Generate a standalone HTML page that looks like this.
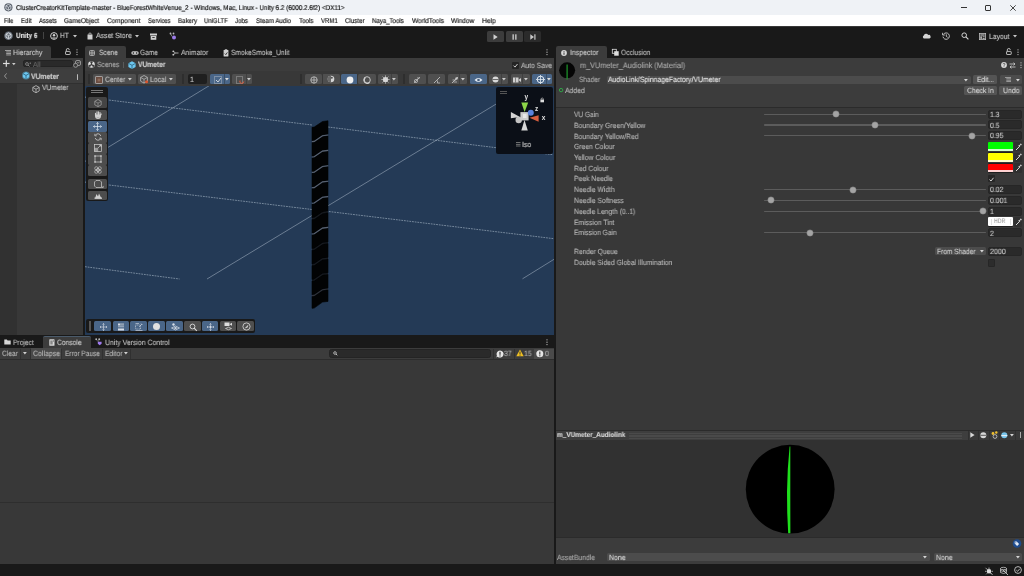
<!DOCTYPE html>
<html><head><meta charset="utf-8"><title>Unity</title><style>
*{margin:0;padding:0;box-sizing:border-box}
html,body{width:1024px;height:576px;overflow:hidden;background:#383838;font-family:"Liberation Sans",sans-serif}
.a{position:absolute}
.t{white-space:nowrap;line-height:12px;height:12px;transform-origin:0 50%;will-change:transform;text-rendering:geometricPrecision;-webkit-text-stroke:0.12px currentColor}
svg{overflow:visible}
</style></head><body>
<div class="a" style="left:0px;top:0px;width:1024px;height:15.3px;background:#eff2f6;"></div>
<svg class="a" style="left:4px;top:3px;" width="9" height="9" viewBox="0 0 9 9"><circle cx="4.4" cy="4.3" r="4.1" fill="#59616c"/><path d="M4.4 1.4L6.9 2.8V5.8L4.4 7.2L1.9 5.8V2.8Z" fill="none" stroke="#dfe4ea" stroke-width="0.8"/><path d="M1.9 2.8L4.4 4.3L6.9 2.8M4.4 4.3V7.2" fill="none" stroke="#dfe4ea" stroke-width="0.7"/></svg>
<div class="a t " style="left:16px;top:2.50px;font-size:6.95px;transform:scaleX(0.9099);color:#111;font-weight:400;-webkit-text-stroke:0.18px #111">ClusterCreatorKitTemplate-master - BlueForestWhiteVenue_2 - Windows, Mac, Linux - Unity 6.2 (6000.2.6f2) &lt;DX11&gt;</div>
<div class="a" style="left:961px;top:7px;width:6px;height:1px;background:#333;"></div>
<div class="a" style="left:985px;top:4.5px;width:6px;height:6px;background:transparent;border:1px solid #333;box-sizing:border-box;border-radius:1px"></div>
<svg class="a" style="left:1010px;top:4.5px;" width="6" height="6" viewBox="0 0 6 6"><path d="M0.3 0.3L5.7 5.7M5.7 0.3L0.3 5.7" stroke="#333" stroke-width="0.9"/></svg>
<div class="a" style="left:0px;top:15.3px;width:1024px;height:11.2px;background:#ffffff;"></div>
<div class="a t " style="left:3.8px;top:15.80px;font-size:6.88px;transform:scaleX(0.8350);color:#111;font-weight:400;-webkit-text-stroke:0.15px #111">File</div>
<div class="a t " style="left:20.5px;top:15.80px;font-size:6.88px;transform:scaleX(0.8863);color:#111;font-weight:400;-webkit-text-stroke:0.15px #111">Edit</div>
<div class="a t " style="left:38.8px;top:15.80px;font-size:6.88px;transform:scaleX(0.8603);color:#111;font-weight:400;-webkit-text-stroke:0.15px #111">Assets</div>
<div class="a t " style="left:64px;top:15.80px;font-size:6.88px;transform:scaleX(0.9069);color:#111;font-weight:400;-webkit-text-stroke:0.15px #111">GameObject</div>
<div class="a t " style="left:106.8px;top:15.80px;font-size:6.88px;transform:scaleX(0.9355);color:#111;font-weight:400;-webkit-text-stroke:0.15px #111">Component</div>
<div class="a t " style="left:147.5px;top:15.80px;font-size:6.88px;transform:scaleX(0.8535);color:#111;font-weight:400;-webkit-text-stroke:0.15px #111">Services</div>
<div class="a t " style="left:177.8px;top:15.80px;font-size:6.88px;transform:scaleX(0.8880);color:#111;font-weight:400;-webkit-text-stroke:0.15px #111">Bakery</div>
<div class="a t " style="left:204px;top:15.80px;font-size:6.88px;transform:scaleX(0.8676);color:#111;font-weight:400;-webkit-text-stroke:0.15px #111">UniGLTF</div>
<div class="a t " style="left:235px;top:15.80px;font-size:6.88px;transform:scaleX(0.8952);color:#111;font-weight:400;-webkit-text-stroke:0.15px #111">Jobs</div>
<div class="a t " style="left:256px;top:15.80px;font-size:6.88px;transform:scaleX(0.8978);color:#111;font-weight:400;-webkit-text-stroke:0.15px #111">Steam Audio</div>
<div class="a t " style="left:299px;top:15.80px;font-size:6.88px;transform:scaleX(0.9035);color:#111;font-weight:400;-webkit-text-stroke:0.15px #111">Tools</div>
<div class="a t " style="left:321px;top:15.80px;font-size:6.88px;transform:scaleX(0.8769);color:#111;font-weight:400;-webkit-text-stroke:0.15px #111">VRM1</div>
<div class="a t " style="left:345.3px;top:15.80px;font-size:6.88px;transform:scaleX(0.8955);color:#111;font-weight:400;-webkit-text-stroke:0.15px #111">Cluster</div>
<div class="a t " style="left:372.3px;top:15.80px;font-size:6.88px;transform:scaleX(0.8838);color:#111;font-weight:400;-webkit-text-stroke:0.15px #111">Naya_Tools</div>
<div class="a t " style="left:411.5px;top:15.80px;font-size:6.88px;transform:scaleX(0.9446);color:#111;font-weight:400;-webkit-text-stroke:0.15px #111">WorldTools</div>
<div class="a t " style="left:451px;top:15.80px;font-size:6.88px;transform:scaleX(0.9508);color:#111;font-weight:400;-webkit-text-stroke:0.15px #111">Window</div>
<div class="a t " style="left:482.3px;top:15.80px;font-size:6.88px;transform:scaleX(0.9725);color:#111;font-weight:400;-webkit-text-stroke:0.15px #111">Help</div>
<div class="a" style="left:0px;top:26.5px;width:1024px;height:19px;background:#191919;"></div>
<svg class="a" style="left:4px;top:31px;" width="9" height="10" viewBox="0 0 9 10"><circle cx="4.5" cy="4.8" r="4.3" fill="#6a727c"/><path d="M4.5 1.8L7 3.2V6.3L4.5 7.7L2 6.3V3.2Z" fill="none" stroke="#e2e6ea" stroke-width="0.8"/><path d="M2 3.2L4.5 4.7L7 3.2M4.5 4.7V7.7" fill="none" stroke="#e2e6ea" stroke-width="0.7"/></svg>
<div class="a t " style="left:15.6px;top:30.40px;font-size:7.59px;transform:scaleX(0.8496);color:#e6e6e6;font-weight:700;">Unity 6</div>
<div class="a" style="left:42.5px;top:32px;width:0.8px;height:7px;background:#444;"></div>
<svg class="a" style="left:49.5px;top:32px;" width="8" height="8" viewBox="0 0 8 8"><circle cx="4" cy="4" r="3.4" fill="none" stroke="#cfcfcf" stroke-width="1"/><circle cx="4" cy="3.2" r="1.2" fill="#cfcfcf"/><path d="M1.8 5.6 Q4 7.8 6.2 5.6" fill="#cfcfcf"/></svg>
<div class="a t " style="left:59.6px;top:30.40px;font-size:7.59px;transform:scaleX(0.8698);color:#c8c8c8;font-weight:400;">HT</div>
<svg class="a" style="left:72.5px;top:34.5px;" width="4" height="3" viewBox="0 0 4 3"><path d="M0 0H4L2 2.5Z" fill="#c8c8c8"/></svg>
<svg class="a" style="left:86.5px;top:31.5px;" width="6" height="8" viewBox="0 0 6 8"><path d="M0.5 2.5H5.5V7.5H0.5Z" fill="#cfcfcf"/><path d="M1.8 2.5V1.6Q3 0.2 4.2 1.6V2.5" fill="none" stroke="#cfcfcf" stroke-width="0.8"/></svg>
<div class="a t " style="left:96px;top:30.40px;font-size:7.59px;transform:scaleX(0.9125);color:#c8c8c8;font-weight:400;">Asset Store</div>
<svg class="a" style="left:135px;top:34.5px;" width="4" height="3" viewBox="0 0 4 3"><path d="M0 0H4L2 2.5Z" fill="#c8c8c8"/></svg>
<svg class="a" style="left:150px;top:32.5px;" width="7" height="7" viewBox="0 0 7 7"><rect x="0" y="0.5" width="7" height="2" fill="#d0d0d0"/><rect x="0.7" y="3" width="5.6" height="3.8" fill="#d0d0d0"/><rect x="2.3" y="4" width="2.4" height="0.8" fill="#191919"/></svg>
<svg class="a" style="left:169px;top:32px;" width="8" height="8" viewBox="0 0 8 8"><circle cx="1.5" cy="1.5" r="0.9" fill="#bbb"/><circle cx="4.5" cy="1.5" r="0.9" fill="#bbb"/><path d="M1.5 1.5 L3 4.5" stroke="#bbb" stroke-width="0.6"/><circle cx="5" cy="5.5" r="2" fill="#9b7be8"/></svg>
<div class="a" style="left:487px;top:31px;width:17px;height:10.5px;background:#3c3c3c;border-radius:1.5px"></div>
<div class="a" style="left:505.5px;top:31px;width:17px;height:10.5px;background:#3c3c3c;border-radius:1.5px"></div>
<div class="a" style="left:524px;top:31px;width:17px;height:10.5px;background:#2b2b2b;border-radius:1.5px"></div>
<svg class="a" style="left:493px;top:33.5px;" width="5" height="6" viewBox="0 0 5 6"><path d="M0.5 0.3L4.7 3L0.5 5.7Z" fill="#d0d0d0"/></svg>
<svg class="a" style="left:511.5px;top:33.5px;" width="5" height="6" viewBox="0 0 5 6"><rect x="0.5" y="0.3" width="1.3" height="5.4" fill="#d0d0d0"/><rect x="3.2" y="0.3" width="1.3" height="5.4" fill="#d0d0d0"/></svg>
<svg class="a" style="left:529.5px;top:33.5px;" width="6" height="6" viewBox="0 0 6 6"><path d="M0.3 0.3L4 3L0.3 5.7Z" fill="#c8c8c8"/><rect x="4.3" y="0.3" width="1.2" height="5.4" fill="#c8c8c8"/></svg>
<svg class="a" style="left:922px;top:32.5px;" width="9" height="6" viewBox="0 0 9 6"><path d="M1.8 5.5 A1.6 1.6 0 0 1 1.8 2.6 A2.4 2.4 0 0 1 6.2 2 A1.8 1.8 0 0 1 7.4 5.5Z" fill="#d4d4d4"/></svg>
<svg class="a" style="left:941.5px;top:32px;" width="8" height="8" viewBox="0 0 8 8"><path d="M1.6 2.2 A3.2 3.2 0 1 1 1 4.6" fill="none" stroke="#cfcfcf" stroke-width="0.9"/><path d="M0.6 0.8V3H2.8" fill="none" stroke="#cfcfcf" stroke-width="0.9"/><path d="M4.3 2.3V4.3L5.6 5.3" fill="none" stroke="#cfcfcf" stroke-width="0.9"/></svg>
<svg class="a" style="left:961px;top:32px;" width="8" height="8" viewBox="0 0 8 8"><circle cx="3.2" cy="3.2" r="2.3" fill="none" stroke="#d4d4d4" stroke-width="1"/><path d="M4.9 4.9L7.4 7.4" stroke="#d4d4d4" stroke-width="1.2"/></svg>
<svg class="a" style="left:978.5px;top:32.5px;" width="7" height="7" viewBox="0 0 7 7"><rect x="0.4" y="0.4" width="6.2" height="6.2" fill="none" stroke="#c0c0c0" stroke-width="0.8"/><rect x="1.3" y="1.4" width="4.4" height="1.2" fill="#c0c0c0"/><rect x="1.3" y="3.3" width="1.6" height="2.6" fill="#c0c0c0"/><rect x="3.6" y="3.3" width="2.1" height="1" fill="#c0c0c0"/><rect x="3.6" y="5" width="2.1" height="0.9" fill="#c0c0c0"/></svg>
<div class="a t " style="left:988.6px;top:30.80px;font-size:7.59px;transform:scaleX(0.8952);color:#c8c8c8;font-weight:400;">Layout</div>
<svg class="a" style="left:1013px;top:35px;" width="4" height="3" viewBox="0 0 4 3"><path d="M0 0H4L2 2.5Z" fill="#c8c8c8"/></svg>
<div class="a" style="left:0px;top:45.5px;width:1024px;height:12.5px;background:#191919;"></div>
<div class="a" style="left:0px;top:58px;width:83px;height:277px;background:#383838;"></div>
<div class="a" style="left:0px;top:83px;width:17px;height:252px;background:#313131;"></div>
<div class="a" style="left:0px;top:46px;width:50.5px;height:12.5px;background:#3c3c3c;border-radius:0 2px 0 0"></div>
<svg class="a" style="left:4.5px;top:50px;" width="6" height="5.5" viewBox="0 0 6 5.5"><rect x="0" y="0" width="6" height="0.9" fill="#aaa"/><rect x="1.2" y="1.5" width="4.8" height="0.9" fill="#aaa"/><rect x="1.2" y="3" width="4.8" height="0.9" fill="#aaa"/><rect x="1.2" y="4.5" width="4.8" height="0.9" fill="#aaa"/></svg>
<div class="a t " style="left:12.7px;top:47.20px;font-size:7.65px;transform:scaleX(0.9018);color:#c8c8c8;font-weight:400;">Hierarchy</div>
<svg class="a" style="left:64.8px;top:48.3px;" width="6" height="7" viewBox="0 0 6 7"><path d="M1.3 3.3V1.9Q1.3 0.5 2.8 0.5Q4.3 0.5 4.3 1.9" fill="none" stroke="#d6d6d6" stroke-width="0.85"/><rect x="0.6" y="3.4" width="4.6" height="3.1" rx="0.5" fill="none" stroke="#d6d6d6" stroke-width="0.85"/></svg>
<svg class="a" style="left:75.8px;top:49px;" width="2" height="7" viewBox="0 0 2 7"><circle cx="1" cy="0.8" r="0.6" fill="#cfcfcf"/><circle cx="1" cy="3.2" r="0.6" fill="#cfcfcf"/><circle cx="1" cy="5.6" r="0.6" fill="#cfcfcf"/></svg>
<div class="a" style="left:0px;top:58px;width:83px;height:11px;background:#3c3c3c;"></div>
<svg class="a" style="left:3px;top:60px;" width="7" height="7" viewBox="0 0 7 7"><rect x="0" y="2.9" width="6.6" height="1.2" fill="#ddd"/><rect x="2.7" y="0.2" width="1.2" height="6.6" fill="#ddd"/></svg>
<svg class="a" style="left:12.3px;top:62.5px;" width="4" height="3" viewBox="0 0 4 3"><path d="M0 0H3.6L1.8 2.3Z" fill="#ccc"/></svg>
<div class="a" style="left:23px;top:60.3px;width:50px;height:7px;background:#2a2a2a;border-radius:2px;border:0.5px solid #232323"></div>
<svg class="a" style="left:25px;top:61.5px;" width="6" height="5" viewBox="0 0 6 5"><circle cx="2" cy="2" r="1.4" fill="none" stroke="#999" stroke-width="0.7"/><path d="M3 3L4.5 4.5" stroke="#999" stroke-width="0.8"/><path d="M4.6 1.2H6M5.3 .5V2" stroke="#999" stroke-width="0.5"/></svg>
<div class="a t " style="left:33px;top:58.50px;font-size:7.37px;transform:scaleX(0.9091);color:#6a6a6a;font-weight:400;">All</div>
<svg class="a" style="left:73px;top:60px;" width="8" height="8" viewBox="0 0 8 8"><rect x="2.5" y="0.5" width="5" height="5" rx="1.5" fill="none" stroke="#aaa" stroke-width="0.8"/><circle cx="2.6" cy="5.3" r="2" fill="#383838" stroke="#aaa" stroke-width="0.8"/><path d="M4.3 2.2L5.3 3.2L6.6 1.7" fill="none" stroke="#aaa" stroke-width="0.7"/></svg>
<div class="a" style="left:0px;top:69px;width:83px;height:14px;background:#3e3e3e;"></div>
<div class="a" style="left:0px;top:82.6px;width:83px;height:0.6px;background:#303030;"></div>
<svg class="a" style="left:3.5px;top:73px;" width="3" height="6" viewBox="0 0 3 6"><path d="M2.6 0.4L0.5 3L2.6 5.6" fill="none" stroke="#aaa" stroke-width="0.8"/></svg>
<svg class="a" style="left:22px;top:71px;" width="8" height="9" viewBox="0 0 8 9"><circle cx="4" cy="4.5" r="4" fill="#5fbde8" opacity="0.5"/><path d="M4 1L7 2.7V6.2L4 7.9L1 6.2V2.7Z" fill="#6cc7f0"/><path d="M1 2.7L4 4.4L7 2.7M4 4.4V7.9" fill="none" stroke="#1f4e66" stroke-width="0.7"/></svg>
<div class="a t " style="left:31px;top:70.90px;font-size:7.81px;transform:scaleX(0.8717);color:#d0d0d0;font-weight:700;">VUmeter</div>
<div class="a" style="left:76.5px;top:74px;width:1.4px;height:5.5px;background:#bbb;border-radius:0.5px"></div>
<svg class="a" style="left:32px;top:84.5px;" width="8" height="8" viewBox="0 0 8 8"><path d="M4 0.6L7.2 2.4V6L4 7.7L0.8 6V2.4Z" fill="none" stroke="#c0c0c0" stroke-width="0.8"/><path d="M0.8 2.4L4 4.2L7.2 2.4M4 4.2V7.7" fill="none" stroke="#c0c0c0" stroke-width="0.8"/></svg>
<div class="a t " style="left:41.5px;top:82.40px;font-size:7.65px;transform:scaleX(0.8786);color:#c4c4c4;font-weight:400;">VUmeter</div>
<div class="a" style="left:83px;top:58px;width:2px;height:277px;background:#191919;"></div>
<div class="a" style="left:85px;top:58px;width:469px;height:277px;background:#383838;"></div>
<div class="a" style="left:85px;top:46px;width:41px;height:12.5px;background:#3c3c3c;border-radius:2px 2px 0 0"></div>
<svg class="a" style="left:89px;top:49.5px;" width="6" height="6" viewBox="0 0 6 6"><rect x="0.5" y="0.5" width="5" height="5" rx="1" fill="none" stroke="#bbb" stroke-width="0.8"/><path d="M0.5 2.3H5.5M0.5 3.8H5.5M2.3 0.5V5.5M3.8 0.5V5.5" stroke="#bbb" stroke-width="0.6"/></svg>
<div class="a t " style="left:98.5px;top:47.10px;font-size:7.65px;transform:scaleX(0.8650);color:#c8c8c8;font-weight:400;">Scene</div>
<svg class="a" style="left:131px;top:50.5px;" width="8" height="4" viewBox="0 0 8 4"><rect x="0.3" y="0.3" width="7.4" height="3.4" rx="1.7" fill="#c8c8c8"/><circle cx="2.4" cy="2" r="0.8" fill="#191919"/><circle cx="5.6" cy="2" r="0.8" fill="#191919"/></svg>
<div class="a t " style="left:140px;top:47.10px;font-size:7.65px;transform:scaleX(0.8598);color:#bdbdbd;font-weight:400;">Game</div>
<svg class="a" style="left:172px;top:49.5px;" width="7" height="6" viewBox="0 0 7 6"><circle cx="1.3" cy="1.3" r="0.9" fill="#ccc"/><circle cx="1.3" cy="4.7" r="0.9" fill="#ccc"/><path d="M1.5 1.5L3.5 3H6.5M1.5 4.5L3.5 3" stroke="#ccc" stroke-width="0.8" fill="none"/></svg>
<div class="a t " style="left:180.5px;top:47.10px;font-size:7.65px;transform:scaleX(0.8891);color:#bdbdbd;font-weight:400;">Animator</div>
<svg class="a" style="left:222.5px;top:48.5px;" width="6" height="8" viewBox="0 0 6 8"><rect x="0.6" y="1" width="4.8" height="6.5" rx="0.6" fill="#d0d0d0"/><rect x="1.8" y="0.3" width="2.4" height="1.4" fill="#d0d0d0"/><path d="M1.8 4.6L2.8 5.6L4.4 3.4" stroke="#191919" stroke-width="0.8" fill="none"/></svg>
<div class="a t " style="left:230.5px;top:47.10px;font-size:7.65px;transform:scaleX(0.8714);color:#bdbdbd;font-weight:400;">SmokeSmoke_Unlit</div>
<svg class="a" style="left:545.5px;top:49px;" width="2" height="7" viewBox="0 0 2 7"><circle cx="1" cy="0.8" r="0.6" fill="#cfcfcf"/><circle cx="1" cy="3.2" r="0.6" fill="#cfcfcf"/><circle cx="1" cy="5.6" r="0.6" fill="#cfcfcf"/></svg>
<div class="a" style="left:85px;top:58px;width:469px;height:12.5px;background:#3c3c3c;"></div>
<svg class="a" style="left:88px;top:61px;" width="7" height="7" viewBox="0 0 7 7"><circle cx="3.5" cy="3.5" r="3.3" fill="#ddd"/><circle cx="3.5" cy="3.5" r="0.9" fill="#3c3c3c"/><path d="M3.5 3.5L2 0.8A3 3 0 0 1 5 0.8Z M3.5 3.5L6.5 3.9A3 3 0 0 1 5 6.3Z M3.5 3.5L2 6.3A3 3 0 0 1 0.5 3.9Z" fill="#3c3c3c"/></svg>
<div class="a t " style="left:96.5px;top:59.20px;font-size:7.65px;transform:scaleX(0.8706);color:#aaaaaa;font-weight:400;">Scenes</div>
<div class="a" style="left:122.7px;top:61.5px;width:0.7px;height:6px;background:#5a5a5a;"></div>
<svg class="a" style="left:128.3px;top:60.5px;" width="8" height="8" viewBox="0 0 8 8"><path d="M4 0.3L7.6 2.3V6.1L4 8L0.4 6.1V2.3Z" fill="#6cc7f0"/><path d="M0.4 2.3L4 4.3L7.6 2.3M4 4.3V8" fill="none" stroke="#24536b" stroke-width="0.7"/></svg>
<div class="a t " style="left:137.5px;top:59.20px;font-size:7.81px;transform:scaleX(0.8561);color:#d2d2d2;font-weight:700;">VUmeter</div>
<div class="a" style="left:512px;top:62px;width:7px;height:7px;background:#242424;border-radius:1px"></div>
<svg class="a" style="left:513px;top:63px;" width="5" height="5" viewBox="0 0 5 5"><path d="M0.5 2.6L2 4.1L4.5 1" fill="none" stroke="#ddd" stroke-width="0.9"/></svg>
<div class="a t " style="left:521px;top:59.80px;font-size:7.65px;transform:scaleX(0.8788);color:#b8b8b8;font-weight:400;">Auto Save</div>
<div class="a" style="left:85px;top:70.5px;width:469px;height:15.5px;background:#383838;"></div>
<div class="a" style="left:88.4px;top:74px;width:1.5px;height:10.3px;background:#2e2e2e;"></div>
<div class="a" style="left:93.3px;top:74px;width:42.5px;height:10.4px;background:#4f4f4f;border-radius:1.5px"></div>
<svg class="a" style="left:95px;top:75.5px;" width="8" height="8" viewBox="0 0 8 8"><rect x="0.5" y="0.5" width="7" height="7" rx="0.6" fill="#6a4c40" stroke="#b4b4b4" stroke-width="0.8"/><rect x="2.6" y="2.6" width="2.8" height="2.8" fill="#8a6a5a"/></svg>
<div class="a t " style="left:104.8px;top:74.00px;font-size:7.65px;transform:scaleX(0.8803);color:#c0c0c0;font-weight:400;">Center</div>
<svg class="a" style="left:128.4px;top:78px;" width="4" height="3" viewBox="0 0 4 3"><path d="M0 0H3.8L1.9 2.4Z" fill="#cfcfcf"/></svg>
<div class="a" style="left:138px;top:74px;width:38px;height:10.4px;background:#4f4f4f;border-radius:1.5px"></div>
<svg class="a" style="left:139.5px;top:75px;" width="9" height="9" viewBox="0 0 9 9"><path d="M4 0.5L7.4 2.4V6.2L4 8.1L0.6 6.2V2.4Z" fill="none" stroke="#bbb" stroke-width="0.8"/><path d="M0.6 2.4L4 4.3L7.4 2.4M4 4.3V8.1" fill="none" stroke="#bbb" stroke-width="0.7"/><circle cx="6.6" cy="6.8" r="1.5" fill="#d9552e"/></svg>
<div class="a t " style="left:149.6px;top:74.00px;font-size:7.65px;transform:scaleX(0.8973);color:#c0c0c0;font-weight:400;">Local</div>
<svg class="a" style="left:169px;top:78px;" width="4" height="3" viewBox="0 0 4 3"><path d="M0 0H3.8L1.9 2.4Z" fill="#cfcfcf"/></svg>
<div class="a" style="left:182px;top:74px;width:1.5px;height:10.3px;background:#2e2e2e;"></div>
<div class="a" style="left:187.7px;top:74px;width:19.5px;height:10.4px;background:#1f1f1f;border-radius:2px"></div>
<div class="a t " style="left:190.3px;top:73.90px;font-size:7.65px;transform:scaleX(0.9091);color:#c0c0c0;font-weight:400;">1</div>
<div class="a" style="left:210px;top:74px;width:20px;height:10.4px;background:#4a6688;border-radius:1.5px"></div>
<svg class="a" style="left:214px;top:75.5px;" width="9" height="8" viewBox="0 0 9 8"><rect x="0.5" y="0.5" width="7" height="7" fill="none" stroke="#ddd" stroke-width="0.7" stroke-dasharray="1 1"/><path d="M2 4L4 6L7 2" fill="none" stroke="#eee" stroke-width="0.8"/></svg>
<div class="a" style="left:223.5px;top:74px;width:0.7px;height:10.4px;background:#3a4e66;"></div>
<svg class="a" style="left:225px;top:78px;" width="4" height="3" viewBox="0 0 4 3"><path d="M0 0H3.8L1.9 2.4Z" fill="#ddd"/></svg>
<div class="a" style="left:232px;top:74px;width:20px;height:10.4px;background:#4f4f4f;border-radius:1.5px"></div>
<svg class="a" style="left:235.5px;top:75.5px;" width="9" height="8" viewBox="0 0 9 8"><rect x="0.5" y="0.5" width="6" height="7" fill="none" stroke="#ccc" stroke-width="0.7" stroke-dasharray="1 1"/><path d="M4 4.5A2 2 0 1 0 7.8 5.5" fill="none" stroke="#e05a3a" stroke-width="0.9"/></svg>
<div class="a" style="left:245.5px;top:74px;width:0.7px;height:10.4px;background:#404040;"></div>
<svg class="a" style="left:247px;top:78px;" width="4" height="3" viewBox="0 0 4 3"><path d="M0 0H3.8L1.9 2.4Z" fill="#ccc"/></svg>
<div class="a" style="left:300px;top:74px;width:1.5px;height:10.3px;background:#2e2e2e;"></div>
<div class="a" style="left:305.4px;top:74px;width:16.6px;height:10.4px;background:#4f4f4f;border-radius:1.5px"></div>
<svg class="a" style="left:309.5px;top:75.5px;" width="8" height="8" viewBox="0 0 8 8"><circle cx="4" cy="4" r="3.2" fill="none" stroke="#ccc" stroke-width="0.8"/><path d="M0.8 4H7.2M4 0.8V7.2" stroke="#ccc" stroke-width="0.7"/></svg>
<div class="a" style="left:322px;top:74px;width:18.4px;height:10.4px;background:#4f4f4f;border-radius:1.5px"></div>
<svg class="a" style="left:327px;top:75.3px;" width="8" height="8" viewBox="0 0 8 8"><circle cx="4" cy="4" r="3.3" fill="#d4d4d4"/><path d="M4 0.7A3.3 3.3 0 0 0 4 7.3Z" fill="#6a6a6a"/><circle cx="4.8" cy="2.8" r="1" fill="#4f4f4f"/></svg>
<div class="a" style="left:340.7px;top:74px;width:17.2px;height:10.4px;background:#4a6688;border-radius:1.5px"></div>
<svg class="a" style="left:345.5px;top:75.5px;" width="8" height="8" viewBox="0 0 8 8"><circle cx="4" cy="4" r="3.4" fill="#f0f0f0"/></svg>
<div class="a" style="left:358px;top:74px;width:18px;height:10.4px;background:#4f4f4f;border-radius:1.5px"></div>
<svg class="a" style="left:363px;top:75.5px;" width="8" height="8" viewBox="0 0 8 8"><circle cx="4" cy="4" r="3.3" fill="none" stroke="#d0d0d0" stroke-width="0.9"/><path d="M2.5 1.5A3 3 0 0 0 6.5 6.5" fill="none" stroke="#d0d0d0" stroke-width="1.1"/></svg>
<div class="a" style="left:377.9px;top:74px;width:20px;height:10.4px;background:#4f4f4f;border-radius:1.5px"></div>
<svg class="a" style="left:381px;top:75.3px;" width="9" height="9" viewBox="0 0 9 9"><circle cx="4.5" cy="4.5" r="2.6" fill="#d6d6d6"/><path d="M4.5 0.3V8.7M0.3 4.5H8.7M1.5 1.5L7.5 7.5M7.5 1.5L1.5 7.5" stroke="#d6d6d6" stroke-width="0.6"/></svg>
<div class="a" style="left:390.5px;top:74px;width:0.7px;height:10.4px;background:#404040;"></div>
<svg class="a" style="left:392px;top:78px;" width="4" height="3" viewBox="0 0 4 3"><path d="M0 0H3.8L1.9 2.4Z" fill="#ccc"/></svg>
<div class="a" style="left:403.3px;top:74px;width:1.5px;height:10.3px;background:#2e2e2e;"></div>
<div class="a" style="left:321.6px;top:74px;width:0.8px;height:10.4px;background:#383838;"></div>
<div class="a" style="left:340.0px;top:74px;width:0.8px;height:10.4px;background:#383838;"></div>
<div class="a" style="left:357.40000000000003px;top:74px;width:0.8px;height:10.4px;background:#383838;"></div>
<div class="a" style="left:377.20000000000005px;top:74px;width:0.8px;height:10.4px;background:#383838;"></div>
<div class="a" style="left:409px;top:74px;width:16.8px;height:10.4px;background:#4f4f4f;border-radius:1.5px"></div>
<svg class="a" style="left:413px;top:75.5px;" width="8" height="8" viewBox="0 0 8 8"><path d="M1 6.8L7 1.2" stroke="#ccc" stroke-width="0.8"/><circle cx="3" cy="5" r="1.6" fill="none" stroke="#ccc" stroke-width="0.7"/><path d="M4 2H6.5" stroke="#ccc" stroke-width="0.7"/></svg>
<div class="a" style="left:428px;top:74px;width:17px;height:10.4px;background:#4f4f4f;border-radius:1.5px"></div>
<svg class="a" style="left:432.5px;top:75.5px;" width="8" height="8" viewBox="0 0 8 8"><path d="M1 7L7 1" stroke="#ccc" stroke-width="0.8"/><path d="M4.5 4.5V7H7" fill="none" stroke="#ccc" stroke-width="0.7"/></svg>
<div class="a" style="left:447.7px;top:74px;width:19.8px;height:10.4px;background:#4f4f4f;border-radius:1.5px"></div>
<svg class="a" style="left:450.5px;top:75.5px;" width="8" height="8" viewBox="0 0 8 8"><path d="M1 7L7 1" stroke="#ccc" stroke-width="0.8"/><path d="M1.5 4H5M2.5 6H6" stroke="#ccc" stroke-width="0.7"/><circle cx="5.5" cy="2.5" r="1.2" fill="#ccc"/></svg>
<div class="a" style="left:459px;top:74px;width:0.7px;height:10.4px;background:#404040;"></div>
<svg class="a" style="left:461.2px;top:78px;" width="4" height="3" viewBox="0 0 4 3"><path d="M0 0H3.8L1.9 2.4Z" fill="#ccc"/></svg>
<div class="a" style="left:470px;top:74px;width:16.7px;height:10.4px;background:#4a6688;border-radius:1.5px"></div>
<svg class="a" style="left:474px;top:76.5px;" width="9" height="6" viewBox="0 0 9 6"><path d="M0.5 3Q4.5 -1 8.5 3Q4.5 7 0.5 3Z" fill="#e8eef5"/><circle cx="4.5" cy="3" r="1.3" fill="#46607e"/></svg>
<div class="a" style="left:489px;top:74px;width:19px;height:10.4px;background:#4f4f4f;border-radius:1.5px"></div>
<svg class="a" style="left:492px;top:76px;" width="7" height="7" viewBox="0 0 7 7"><circle cx="3.5" cy="3.5" r="3" fill="#d8d8d8"/><path d="M0.5 3.5H6.5" stroke="#4f4f4f" stroke-width="0.8"/></svg>
<div class="a" style="left:500.5px;top:74px;width:0.7px;height:10.4px;background:#404040;"></div>
<svg class="a" style="left:502px;top:78px;" width="4" height="3" viewBox="0 0 4 3"><path d="M0 0H3.8L1.9 2.4Z" fill="#ccc"/></svg>
<div class="a" style="left:510.6px;top:74px;width:19.1px;height:10.4px;background:#4f4f4f;border-radius:1.5px"></div>
<svg class="a" style="left:513px;top:76.5px;" width="8" height="6" viewBox="0 0 8 6"><rect x="0" y="0.5" width="5.5" height="5" fill="#cfcfcf"/><path d="M5.5 3L8 1V5Z" fill="#cfcfcf"/><rect x="2" y="0.5" width="0.6" height="5" fill="#4f4f4f"/></svg>
<div class="a" style="left:522px;top:74px;width:0.7px;height:10.4px;background:#404040;"></div>
<svg class="a" style="left:523.6px;top:78px;" width="4" height="3" viewBox="0 0 4 3"><path d="M0 0H3.8L1.9 2.4Z" fill="#ccc"/></svg>
<div class="a" style="left:532px;top:74px;width:20px;height:10.4px;background:#4a6688;border-radius:1.5px"></div>
<svg class="a" style="left:535.5px;top:75.3px;" width="9" height="9" viewBox="0 0 9 9"><circle cx="4.5" cy="4.5" r="3.3" fill="none" stroke="#e0e8f0" stroke-width="1"/><path d="M4.5 0V9M0 4.5H9" stroke="#e0e8f0" stroke-width="0.8"/></svg>
<div class="a" style="left:545.5px;top:74px;width:0.7px;height:10.4px;background:#3a4e66;"></div>
<svg class="a" style="left:547px;top:78px;" width="4" height="3" viewBox="0 0 4 3"><path d="M0 0H3.8L1.9 2.4Z" fill="#ddd"/></svg>
<div class="a" style="left:85px;top:86px;width:469px;height:249px;background:#243a56;"></div>
<svg class="a" style="left:0;top:0" width="1024" height="576" viewBox="0 0 1024 576"><defs><clipPath id="sv"><rect x="85" y="86" width="469" height="249"/></clipPath></defs><g clip-path="url(#sv)">
<line x1="85" y1="97.1" x2="312" y2="125" stroke="#aebdcc" stroke-width="0.75" stroke-dasharray="1.8 0.9" opacity="0.8"/>
<line x1="328" y1="127" x2="553" y2="154.7" stroke="#aebdcc" stroke-width="0.75" stroke-dasharray="1.8 0.9" opacity="0.8"/>
<line x1="85" y1="161.4" x2="212" y2="84" stroke="#aebdcc" stroke-width="0.65" opacity="0.8"/>
<line x1="85" y1="182.1" x2="554" y2="238.7" stroke="#aebdcc" stroke-width="0.75" stroke-dasharray="1.8 0.9" opacity="0.8"/>
<line x1="207" y1="279" x2="497" y2="103.5" stroke="#aebdcc" stroke-width="0.65" opacity="0.8"/>
<line x1="85" y1="266.7" x2="179.5" y2="279" stroke="#aebdcc" stroke-width="0.75" stroke-dasharray="1.8 0.9" opacity="0.8"/>
<line x1="522.5" y1="278.8" x2="554" y2="259.3" stroke="#aebdcc" stroke-width="0.65" opacity="0.8"/>
<path d="M312.00 127.30 L314.20 127.10 L322.50 121.50 L328.00 120.80 L328.00 134.25 L322.50 134.95 L314.20 140.65 L312.00 140.85Z" fill="#020304" stroke="#020304" stroke-width="0.6" stroke-linejoin="round"/><path d="M312.00 142.35 L314.20 142.15 L322.50 136.45 L328.00 135.75 L328.00 149.65 L322.50 150.35 L314.20 156.05 L312.00 156.25Z" fill="#020304" stroke="#020304" stroke-width="0.6" stroke-linejoin="round"/><path d="M312.00 157.75 L314.20 157.55 L322.50 151.85 L328.00 151.15 L328.00 165.05 L322.50 165.75 L314.20 171.45 L312.00 171.65Z" fill="#020304" stroke="#020304" stroke-width="0.6" stroke-linejoin="round"/><path d="M312.00 173.15 L314.20 172.95 L322.50 167.25 L328.00 166.55 L328.00 180.45 L322.50 181.15 L314.20 186.85 L312.00 187.05Z" fill="#020304" stroke="#020304" stroke-width="0.6" stroke-linejoin="round"/><path d="M312.00 188.55 L314.20 188.35 L322.50 182.65 L328.00 181.95 L328.00 195.85 L322.50 196.55 L314.20 202.25 L312.00 202.45Z" fill="#020304" stroke="#020304" stroke-width="0.6" stroke-linejoin="round"/><path d="M312.00 203.95 L314.20 203.75 L322.50 198.05 L328.00 197.35 L328.00 211.25 L322.50 211.95 L314.20 217.65 L312.00 217.85Z" fill="#020304" stroke="#020304" stroke-width="0.6" stroke-linejoin="round"/><path d="M312.00 219.35 L314.20 219.15 L322.50 213.45 L328.00 212.75 L328.00 226.65 L322.50 227.35 L314.20 233.05 L312.00 233.25Z" fill="#020304" stroke="#020304" stroke-width="0.6" stroke-linejoin="round"/><path d="M312.00 234.75 L314.20 234.55 L322.50 228.85 L328.00 228.15 L328.00 242.05 L322.50 242.75 L314.20 248.45 L312.00 248.65Z" fill="#020304" stroke="#020304" stroke-width="0.6" stroke-linejoin="round"/><path d="M312.00 250.15 L314.20 249.95 L322.50 244.25 L328.00 243.55 L328.00 257.45 L322.50 258.15 L314.20 263.85 L312.00 264.05Z" fill="#020304" stroke="#020304" stroke-width="0.6" stroke-linejoin="round"/><path d="M312.00 265.55 L314.20 265.35 L322.50 259.65 L328.00 258.95 L328.00 272.85 L322.50 273.55 L314.20 279.25 L312.00 279.45Z" fill="#020304" stroke="#020304" stroke-width="0.6" stroke-linejoin="round"/><path d="M312.00 280.95 L314.20 280.75 L322.50 275.05 L328.00 274.35 L328.00 288.25 L322.50 288.95 L314.20 294.65 L312.00 294.85Z" fill="#020304" stroke="#020304" stroke-width="0.6" stroke-linejoin="round"/><path d="M312.00 296.35 L314.20 296.15 L322.50 290.45 L328.00 289.75 L328.00 301.40 L322.50 302.10 L314.20 308.10 L312.00 308.30Z" fill="#020304" stroke="#020304" stroke-width="0.6" stroke-linejoin="round"/><path d="M312.00 141.60 L314.20 141.40 L322.50 135.70 L328.00 135.00" fill="none" stroke="#5d6472" stroke-width="1.1" opacity="0.95"/><path d="M312.00 157.00 L314.20 156.80 L322.50 151.10 L328.00 150.40" fill="none" stroke="#5d6472" stroke-width="1.1" opacity="0.95"/><path d="M312.00 172.40 L314.20 172.20 L322.50 166.50 L328.00 165.80" fill="none" stroke="#5d6472" stroke-width="1.1" opacity="0.95"/><path d="M312.00 187.80 L314.20 187.60 L322.50 181.90 L328.00 181.20" fill="none" stroke="#5d6472" stroke-width="1.1" opacity="0.95"/><path d="M312.00 203.20 L314.20 203.00 L322.50 197.30 L328.00 196.60" fill="none" stroke="#5d6472" stroke-width="1.1" opacity="0.95"/><path d="M312.00 218.60 L314.20 218.40 L322.50 212.70 L328.00 212.00" fill="none" stroke="#020304" stroke-width="1.7"/><path d="M312.00 218.60 L314.20 218.40 L322.50 212.70 L328.00 212.00" fill="none" stroke="#5d6472" stroke-width="1.1" opacity="0.25"/><path d="M312.00 234.00 L314.20 233.80 L322.50 228.10 L328.00 227.40" fill="none" stroke="#5d6472" stroke-width="1.1" opacity="0.95"/><path d="M312.00 249.40 L314.20 249.20 L322.50 243.50 L328.00 242.80" fill="none" stroke="#020304" stroke-width="1.7"/><path d="M312.00 249.40 L314.20 249.20 L322.50 243.50 L328.00 242.80" fill="none" stroke="#5d6472" stroke-width="1.1" opacity="0.25"/><path d="M312.00 264.80 L314.20 264.60 L322.50 258.90 L328.00 258.20" fill="none" stroke="#020304" stroke-width="1.7"/><path d="M312.00 264.80 L314.20 264.60 L322.50 258.90 L328.00 258.20" fill="none" stroke="#5d6472" stroke-width="1.1" opacity="0.25"/><path d="M312.00 280.20 L314.20 280.00 L322.50 274.30 L328.00 273.60" fill="none" stroke="#020304" stroke-width="1.7"/><path d="M312.00 280.20 L314.20 280.00 L322.50 274.30 L328.00 273.60" fill="none" stroke="#5d6472" stroke-width="1.1" opacity="0.25"/><path d="M312.00 295.60 L314.20 295.40 L322.50 289.70 L328.00 289.00" fill="none" stroke="#020304" stroke-width="1.7"/><path d="M312.00 295.60 L314.20 295.40 L322.50 289.70 L328.00 289.00" fill="none" stroke="#5d6472" stroke-width="1.1" opacity="0.5"/></g></svg>
<div class="a" style="left:86.2px;top:87px;width:22.3px;height:114px;background:#191919;border-radius:2px"></div>
<div class="a" style="left:91px;top:89.5px;width:12px;height:0.8px;background:#777;"></div>
<div class="a" style="left:91px;top:91.8px;width:12px;height:0.8px;background:#777;"></div>
<div class="a" style="left:87.7px;top:97px;width:19.3px;height:11px;background:#444444;border-radius:1.5px"></div>
<div class="a" style="left:87.7px;top:110px;width:19.3px;height:10px;background:#4d4d4d;border-radius:1.5px"></div>
<div class="a" style="left:87.7px;top:121px;width:19.3px;height:10.5px;background:#4a6688;border-radius:1.5px"></div>
<div class="a" style="left:87.7px;top:132px;width:19.3px;height:10.5px;background:#4d4d4d;border-radius:1.5px"></div>
<div class="a" style="left:87.7px;top:143px;width:19.3px;height:10.5px;background:#4d4d4d;border-radius:1.5px"></div>
<div class="a" style="left:87.7px;top:154px;width:19.3px;height:10.5px;background:#4d4d4d;border-radius:1.5px"></div>
<div class="a" style="left:87.7px;top:165px;width:19.3px;height:10.5px;background:#4d4d4d;border-radius:1.5px"></div>
<div class="a" style="left:87.7px;top:178.8px;width:19.3px;height:10.2px;background:#4d4d4d;border-radius:1.5px"></div>
<div class="a" style="left:87.7px;top:190.5px;width:19.3px;height:9.5px;background:#4d4d4d;border-radius:1.5px"></div>
<svg class="a" style="left:93.5px;top:98.5px;" width="8" height="8" viewBox="0 0 8 8"><path d="M4 0.5L7.2 2.3V5.9L4 7.6L0.8 5.9V2.3Z" fill="none" stroke="#aaa" stroke-width="0.7"/><path d="M0.8 2.3L4 4.1L7.2 2.3M4 4.1V7.6" fill="none" stroke="#aaa" stroke-width="0.6"/></svg>
<svg class="a" style="left:93.5px;top:111px;" width="8" height="8" viewBox="0 0 8 8"><path d="M1.5 4.5V2.2M3 4V0.8M4.5 4V0.8M6 4.2V1.6M1.5 4.5Q1.5 7.5 4 7.5Q6.5 7.5 6.5 4.5L7.2 3" fill="none" stroke="#d0d0d0" stroke-width="1.1" stroke-linecap="round"/><rect x="2" y="3.5" width="4.2" height="3.2" fill="#d0d0d0"/></svg>
<svg class="a" style="left:93px;top:122px;" width="9" height="9" viewBox="0 0 9 9"><path d="M4.5 0.5V8.5M0.5 4.5H8.5" stroke="#e4ecf4" stroke-width="0.7"/><path d="M3.3 1.7L4.5 0.5L5.7 1.7M3.3 7.3L4.5 8.5L5.7 7.3M1.7 3.3L0.5 4.5L1.7 5.7M7.3 3.3L8.5 4.5L7.3 5.7" fill="none" stroke="#e4ecf4" stroke-width="0.7"/></svg>
<svg class="a" style="left:93.5px;top:133px;" width="8" height="8" viewBox="0 0 8 8"><path d="M6.8 3A3 3 0 0 0 1.3 2.3M1.2 5A3 3 0 0 0 6.7 5.7" fill="none" stroke="#d0d0d0" stroke-width="0.8"/><path d="M0.8 0.8V2.8H2.8M7.2 7.2V5.2H5.2" fill="none" stroke="#d0d0d0" stroke-width="0.7"/></svg>
<svg class="a" style="left:93.5px;top:144px;" width="8" height="8" viewBox="0 0 8 8"><rect x="0.5" y="0.5" width="7" height="7" fill="none" stroke="#d0d0d0" stroke-width="0.7"/><rect x="0.5" y="3.8" width="3.7" height="3.7" fill="#d0d0d0" opacity="0.6"/><path d="M4 4L7 1M5 1H7V3" fill="none" stroke="#d0d0d0" stroke-width="0.7"/></svg>
<svg class="a" style="left:93.5px;top:155px;" width="8" height="8" viewBox="0 0 8 8"><rect x="1" y="1" width="6" height="6" fill="none" stroke="#d0d0d0" stroke-width="0.7"/><rect x="0.3" y="0.3" width="1.4" height="1.4" fill="#d0d0d0"/><rect x="6.3" y="0.3" width="1.4" height="1.4" fill="#d0d0d0"/><rect x="0.3" y="6.3" width="1.4" height="1.4" fill="#d0d0d0"/><rect x="6.3" y="6.3" width="1.4" height="1.4" fill="#d0d0d0"/></svg>
<svg class="a" style="left:93.5px;top:166px;" width="8" height="8" viewBox="0 0 8 8"><circle cx="4" cy="4" r="1.6" fill="none" stroke="#d0d0d0" stroke-width="0.7"/><circle cx="2.3" cy="2.3" r="1.6" fill="none" stroke="#d0d0d0" stroke-width="0.6"/><circle cx="5.7" cy="2.3" r="1.6" fill="none" stroke="#d0d0d0" stroke-width="0.6"/><circle cx="2.3" cy="5.7" r="1.6" fill="none" stroke="#d0d0d0" stroke-width="0.6"/><circle cx="5.7" cy="5.7" r="1.6" fill="none" stroke="#d0d0d0" stroke-width="0.6"/></svg>
<svg class="a" style="left:93.5px;top:180px;" width="8" height="8" viewBox="0 0 8 8"><path d="M2 0.5H6L7.5 2V7.5H2L0.5 6V2Z" fill="none" stroke="#d0d0d0" stroke-width="0.7"/><path d="M7.5 7.8L9.5 7.8L9.5 5.8Z" fill="#d0d0d0"/></svg>
<svg class="a" style="left:93.5px;top:191.5px;" width="8" height="7" viewBox="0 0 8 7"><path d="M1 6.5L2.5 2L4 4.5L5 1.5L7.5 6.5Z" fill="#d0d0d0"/><rect x="0.5" y="5.5" width="7.5" height="1.3" fill="#d0d0d0"/></svg>
<div class="a" style="left:85.8px;top:319px;width:169.6px;height:13.8px;background:#191919;border-radius:2px"></div>
<div class="a" style="left:88.5px;top:321px;width:0.8px;height:10px;background:#555;"></div>
<div class="a" style="left:90.3px;top:321px;width:0.8px;height:10px;background:#555;"></div>
<div class="a" style="left:94.2px;top:321px;width:16.8px;height:10.4px;background:#4a6688;border-radius:1.5px"></div>
<div class="a" style="left:112.5px;top:321px;width:16.8px;height:10.4px;background:#4a6688;border-radius:1.5px"></div>
<div class="a" style="left:130.2px;top:321px;width:16.8px;height:10.4px;background:#4a6688;border-radius:1.5px"></div>
<div class="a" style="left:148px;top:321px;width:16.8px;height:10.4px;background:#4a6688;border-radius:1.5px"></div>
<div class="a" style="left:166px;top:321px;width:16.8px;height:10.4px;background:#4a6688;border-radius:1.5px"></div>
<div class="a" style="left:184px;top:321px;width:16.8px;height:10.4px;background:#4f4f4f;border-radius:1.5px"></div>
<div class="a" style="left:201.5px;top:321px;width:16.8px;height:10.4px;background:#4a6688;border-radius:1.5px"></div>
<div class="a" style="left:219.5px;top:321px;width:16.8px;height:10.4px;background:#4f4f4f;border-radius:1.5px"></div>
<div class="a" style="left:237.2px;top:321px;width:16.8px;height:10.4px;background:#4f4f4f;border-radius:1.5px"></div>
<svg class="a" style="left:98.5px;top:322.5px;" width="9" height="8" viewBox="0 0 9 8"><path d="M4.5 0.5V7.5M1 4H8" stroke="#d8dee6" stroke-width="0.6"/><path d="M3.5 1.5L4.5 0.5L5.5 1.5M3.5 6.5L4.5 7.5L5.5 6.5M2 3L1 4L2 5M7 3L8 4L7 5" fill="none" stroke="#d8dee6" stroke-width="0.6"/></svg>
<svg class="a" style="left:117px;top:322.5px;" width="8" height="8" viewBox="0 0 8 8"><rect x="1" y="0.5" width="6" height="2" fill="#d8dee6"/><rect x="3" y="0.5" width="4" height="2" fill="#46607e" opacity="0.5"/><rect x="1" y="3.5" width="6" height="0.7" fill="#d8dee6"/><rect x="1" y="5.5" width="6" height="2" fill="#d8dee6"/></svg>
<svg class="a" style="left:135px;top:322.5px;" width="8" height="8" viewBox="0 0 8 8"><path d="M0.5 0.5H4M0.5 7.5H7.5M6 0.5L7.5 2M4 4L7 1" stroke="#d8dee6" stroke-width="0.6" fill="none"/><rect x="0.5" y="2" width="5" height="4" fill="none" stroke="#d8dee6" stroke-width="0.6" stroke-dasharray="1 0.6"/></svg>
<svg class="a" style="left:152.3px;top:322.3px;" width="9" height="9" viewBox="0 0 9 9"><circle cx="4.5" cy="4.5" r="3.5" fill="#e0e0e0"/></svg>
<svg class="a" style="left:170.5px;top:322.5px;" width="9" height="8" viewBox="0 0 9 8"><circle cx="2.5" cy="1.5" r="1.2" fill="#d8dee6"/><path d="M0.5 5L4.5 3L8.5 5L4.5 7Z" fill="none" stroke="#d8dee6" stroke-width="0.7"/><path d="M2.5 5L4.5 4L6.5 5L4.5 6Z" fill="#d8dee6"/></svg>
<svg class="a" style="left:188.5px;top:322.5px;" width="9" height="9" viewBox="0 0 9 9"><circle cx="3.5" cy="3.5" r="2.4" fill="none" stroke="#ddd" stroke-width="0.9"/><path d="M5.2 5.2L7.8 7.8" stroke="#ddd" stroke-width="1.1"/></svg>
<svg class="a" style="left:205.5px;top:322.5px;" width="9" height="8" viewBox="0 0 9 8"><path d="M4.5 0.5V7.5M1 4H8" stroke="#d8dee6" stroke-width="0.6"/><path d="M3.5 1.5L4.5 0.5L5.5 1.5M3.5 6.5L4.5 7.5L5.5 6.5M2 3L1 4L2 5M7 3L8 4L7 5" fill="none" stroke="#d8dee6" stroke-width="0.6"/><circle cx="4.5" cy="4" r="1" fill="#d8dee6"/></svg>
<svg class="a" style="left:223.5px;top:322.3px;" width="9" height="9" viewBox="0 0 9 9"><rect x="0.5" y="0.5" width="5" height="3.5" fill="#ddd"/><path d="M5.5 2.2L8 0.8V3.8Z" fill="#ddd"/><path d="M1.5 6.5Q4.5 4 7.5 6.5Q4.5 9 1.5 6.5Z" fill="none" stroke="#ddd" stroke-width="0.7"/></svg>
<svg class="a" style="left:241.5px;top:322.3px;" width="9" height="9" viewBox="0 0 9 9"><circle cx="4.5" cy="4.5" r="3.6" fill="none" stroke="#ddd" stroke-width="0.8"/><path d="M2.5 6.5L6.5 2.5L5.5 5.5Z" fill="#ddd"/></svg>
<div class="a" style="left:495.8px;top:87px;width:57.2px;height:66.7px;background:#0b0f17;border-radius:2px"></div>
<div class="a" style="left:500px;top:91.2px;width:7px;height:0.7px;background:#555;"></div>
<div class="a" style="left:500px;top:93px;width:7px;height:0.7px;background:#555;"></div>
<svg class="a" style="left:0;top:0" width="1024" height="576" viewBox="0 0 1024 576">
<path d="M510.9 112.1 L510.9 118.2 L520 117Z" fill="#d4d4d4"/>
<circle cx="518.7" cy="120" r="3.2" fill="#c4c4c4"/>
<path d="M521.3 130.4 L527.8 130.4 L524.5 120Z" fill="#d8d8d8"/>
<rect x="520.4" y="112.1" width="8.2" height="8.3" fill="#cdcdcd"/>
<rect x="523" y="114" width="3.5" height="4" fill="#e8e8e8"/>
<path d="M521.3 102.6 L528.2 102.6 L524.6 112.1Z" fill="#8cd448"/>
<circle cx="530.8" cy="112.7" r="3" fill="#5b82dc"/>
<path d="M529.5 117.8 L538.6 115.2 L538.6 121.7Z" fill="#d85e3e"/>
<text x="524.4" y="99.2" font-size="6.5" fill="#e0e0e0" font-family="Liberation Sans" font-weight="700">y</text>
<text x="535" y="111.4" font-size="6.5" fill="#e0e0e0" font-family="Liberation Sans" font-weight="700">z</text>
<text x="541.8" y="120.2" font-size="6.5" fill="#e0e0e0" font-family="Liberation Sans" font-weight="700">x</text>
<rect x="540.4" y="99.5" width="3.6" height="2.8" fill="#ddd"/>
<path d="M541.1 99.5V98.6Q542.2 97.3 543.3 98.6V99.5" fill="none" stroke="#ddd" stroke-width="0.6"/>
<rect x="516" y="142.2" width="4.5" height="0.8" fill="#888"/><rect x="516" y="143.9" width="4.5" height="0.8" fill="#888"/><rect x="516" y="145.6" width="4.5" height="0.8" fill="#888"/>
</svg>
<div class="a t " style="left:521.5px;top:139.10px;font-size:7.59px;transform:scaleX(0.9091);color:#cfcfcf;font-weight:400;">Iso</div>
<div class="a" style="left:0px;top:335px;width:554px;height:13px;background:#191919;"></div>
<div class="a" style="left:0px;top:348px;width:554px;height:216px;background:#383838;"></div>
<div class="a" style="left:554px;top:46px;width:2px;height:518px;background:#191919;"></div>
<svg class="a" style="left:4.1px;top:339.2px;" width="7" height="6" viewBox="0 0 7 6"><path d="M0.3 0.5H2.8L3.6 1.4H6.7V5.6H0.3Z" fill="#d6d6d6"/></svg>
<div class="a t " style="left:13.2px;top:337.00px;font-size:7.65px;transform:scaleX(0.8742);color:#b8b8b8;font-weight:400;">Project</div>
<div class="a" style="left:42.7px;top:335.5px;width:48px;height:12.5px;background:#3c3c3c;border-radius:2px 2px 0 0;border-top:0.7px solid #4a5a6a"></div>
<svg class="a" style="left:49px;top:338.6px;" width="6" height="7" viewBox="0 0 6 7"><rect x="0.3" y="0.3" width="5.2" height="6.4" rx="0.5" fill="#d6d6d6"/><rect x="1.3" y="1.5" width="2.4" height="4" fill="#888"/><rect x="4.1" y="1.5" width="0.8" height="1" fill="#3c3c3c"/></svg>
<div class="a t " style="left:57.1px;top:337.00px;font-size:7.65px;transform:scaleX(0.8770);color:#c8c8c8;font-weight:400;">Console</div>
<svg class="a" style="left:94.7px;top:338.3px;" width="8" height="8" viewBox="0 0 8 8"><circle cx="1.2" cy="1.2" r="0.9" fill="#bbb"/><circle cx="4.2" cy="1.2" r="0.9" fill="#bbb"/><path d="M1.2 1.2L2.8 3.5M4.2 1.2L3.5 3.5" stroke="#bbb" stroke-width="0.5"/><path d="M2.8 3.8H6.6V5.7L4.7 7.3L2.8 5.7Z" fill="#a07bf0"/></svg>
<div class="a t " style="left:104.6px;top:337.00px;font-size:7.65px;transform:scaleX(0.9010);color:#bdbdbd;font-weight:400;">Unity Version Control</div>
<svg class="a" style="left:545.5px;top:339px;" width="2" height="7" viewBox="0 0 2 7"><circle cx="1" cy="0.8" r="0.6" fill="#cfcfcf"/><circle cx="1" cy="3.2" r="0.6" fill="#cfcfcf"/><circle cx="1" cy="5.6" r="0.6" fill="#cfcfcf"/></svg>
<div class="a" style="left:0px;top:348px;width:554px;height:11px;background:#3c3c3c;"></div>
<div class="a" style="left:0px;top:358.6px;width:554px;height:0.6px;background:#2c2c2c;"></div>
<div class="a t " style="left:1.8px;top:348.10px;font-size:7.65px;transform:scaleX(0.8649);color:#b4b4b4;font-weight:400;">Clear</div>
<div class="a" style="left:20px;top:348.5px;width:0.7px;height:10px;background:#303030;"></div>
<svg class="a" style="left:23.1px;top:352.3px;" width="4" height="3" viewBox="0 0 4 3"><path d="M0 0H3.8L1.9 2.4Z" fill="#d0d0d0"/></svg>
<div class="a" style="left:29.6px;top:348.5px;width:0.7px;height:10px;background:#303030;"></div>
<div class="a" style="left:30.5px;top:348.3px;width:30px;height:10.5px;background:#4a4a4a;"></div>
<div class="a t " style="left:32.8px;top:348.10px;font-size:7.65px;transform:scaleX(0.9091);color:#b4b4b4;font-weight:400;">Collapse</div>
<div class="a" style="left:61px;top:348.5px;width:0.7px;height:10px;background:#303030;"></div>
<div class="a t " style="left:64.6px;top:348.10px;font-size:7.65px;transform:scaleX(0.8556);color:#b4b4b4;font-weight:400;">Error Pause</div>
<div class="a" style="left:102px;top:348.5px;width:0.7px;height:10px;background:#303030;"></div>
<div class="a t " style="left:104.6px;top:348.10px;font-size:7.65px;transform:scaleX(0.8713);color:#b4b4b4;font-weight:400;">Editor</div>
<svg class="a" style="left:124px;top:352.3px;" width="4" height="3" viewBox="0 0 4 3"><path d="M0 0H3.8L1.9 2.4Z" fill="#d0d0d0"/></svg>
<div class="a" style="left:130px;top:348.5px;width:0.7px;height:10px;background:#303030;"></div>
<div class="a" style="left:329.4px;top:348.6px;width:161.6px;height:9.4px;background:#2a2a2a;border-radius:2.5px;border:0.6px solid #242424"></div>
<svg class="a" style="left:332.5px;top:351px;" width="5" height="5" viewBox="0 0 5 5"><circle cx="2" cy="2" r="1.3" fill="none" stroke="#ccc" stroke-width="0.8"/><path d="M3 3L4.3 4.3" stroke="#ccc" stroke-width="0.9"/></svg>
<div class="a" style="left:492.5px;top:348.5px;width:0.7px;height:10px;background:#303030;"></div>
<svg class="a" style="left:495.8px;top:349.5px;" width="8" height="8" viewBox="0 0 8 8"><path d="M4 0.4A3.6 3.6 0 1 1 1.6 6.7L0.4 7.6L0.9 5.6A3.6 3.6 0 0 1 4 0.4Z" fill="#e6e6e6"/><rect x="3.4" y="1.8" width="1.2" height="3" fill="#3c3c3c"/><rect x="3.4" y="5.4" width="1.2" height="1.1" fill="#3c3c3c"/></svg>
<div class="a t " style="left:504.2px;top:348.20px;font-size:7.59px;transform:scaleX(0.9091);color:#aaaaaa;font-weight:400;">37</div>
<div class="a" style="left:513.5px;top:348.5px;width:0.7px;height:10px;background:#303030;"></div>
<svg class="a" style="left:516px;top:349.3px;" width="8" height="8" viewBox="0 0 8 8"><path d="M4 0.4L7.7 7.2H0.3Z" fill="#f0c020"/><rect x="3.5" y="2.6" width="1" height="2.6" fill="#3a3a3a"/><rect x="3.5" y="5.7" width="1" height="0.9" fill="#3a3a3a"/></svg>
<div class="a t " style="left:524.3px;top:348.20px;font-size:7.59px;transform:scaleX(0.9091);color:#aaaaaa;font-weight:400;">15</div>
<div class="a" style="left:534px;top:348.5px;width:20px;height:10.3px;background:#4a4a4a;"></div>
<svg class="a" style="left:536px;top:349.5px;" width="8" height="8" viewBox="0 0 8 8"><circle cx="3.8" cy="3.8" r="3.5" fill="#e6e6e6"/><rect x="3.2" y="1.6" width="1.2" height="3" fill="#4a4a4a"/><rect x="3.2" y="5.2" width="1.2" height="1.1" fill="#4a4a4a"/></svg>
<div class="a t " style="left:545.3px;top:348.20px;font-size:7.59px;transform:scaleX(0.9091);color:#aaaaaa;font-weight:400;">0</div>
<div class="a" style="left:0px;top:502px;width:554px;height:0.7px;background:#2e2e2e;"></div>
<div class="a" style="left:0px;top:564px;width:1024px;height:12px;background:#191919;"></div>
<div class="a" style="left:556px;top:58px;width:468px;height:506px;background:#383838;"></div>
<div class="a" style="left:556px;top:46px;width:50.6px;height:12.5px;background:#3c3c3c;border-radius:2px 2px 0 0"></div>
<svg class="a" style="left:561px;top:49.6px;" width="6" height="6" viewBox="0 0 6 6"><circle cx="3" cy="3" r="2.9" fill="#d8d8d8"/><rect x="2.5" y="2.4" width="1" height="2.4" fill="#3c3c3c"/><rect x="2.5" y="1.1" width="1" height="0.8" fill="#3c3c3c"/></svg>
<div class="a t " style="left:569.6px;top:47.20px;font-size:7.65px;transform:scaleX(0.9031);color:#c8c8c8;font-weight:400;">Inspector</div>
<svg class="a" style="left:612px;top:49.3px;" width="7" height="7" viewBox="0 0 7 7"><rect x="0.3" y="0.3" width="4" height="4" fill="none" stroke="#ddd" stroke-width="0.8"/><rect x="2.2" y="2.2" width="4.5" height="4.5" fill="#ddd"/></svg>
<div class="a t " style="left:620.6px;top:47.20px;font-size:7.65px;transform:scaleX(0.8789);color:#bdbdbd;font-weight:400;">Occlusion</div>
<svg class="a" style="left:1005.8px;top:48.3px;" width="6" height="7" viewBox="0 0 6 7"><path d="M1.3 3.3V1.9Q1.3 0.5 2.8 0.5Q4.3 0.5 4.3 1.9" fill="none" stroke="#d6d6d6" stroke-width="0.85"/><rect x="0.6" y="3.4" width="4.6" height="3.1" rx="0.5" fill="none" stroke="#d6d6d6" stroke-width="0.85"/></svg>
<svg class="a" style="left:1016.5px;top:49px;" width="2" height="7" viewBox="0 0 2 7"><circle cx="1" cy="0.8" r="0.6" fill="#cfcfcf"/><circle cx="1" cy="3.2" r="0.6" fill="#cfcfcf"/><circle cx="1" cy="5.6" r="0.6" fill="#cfcfcf"/></svg>
<div class="a" style="left:556px;top:58px;width:468px;height:49px;background:#3c3c3c;"></div>
<div class="a" style="left:556px;top:106.8px;width:468px;height:0.8px;background:#2b2b2b;"></div>
<svg class="a" style="left:559px;top:62px;" width="17" height="18" viewBox="0 0 17 18"><circle cx="8.1" cy="8.35" r="8" fill="#050505"/><path d="M7.5 2.4H8.7V17.4H7.5Z" fill="#1f9a2c"/></svg>
<div class="a t " style="left:579.8px;top:60.40px;font-size:8.00px;transform:scaleX(0.9087);color:#a8a8a8;font-weight:400;">m_VUmeter_Audiolink (Material)</div>
<div class="a t " style="left:578.9px;top:74.20px;font-size:7.65px;transform:scaleX(0.8559);color:#a8a8a8;font-weight:400;">Shader</div>
<div class="a" style="left:606.6px;top:76.2px;width:364px;height:7.6px;background:#4c4c4c;border-radius:1.5px"></div>
<div class="a t " style="left:608.2px;top:74.40px;font-size:7.65px;transform:scaleX(0.8944);color:#e2e2e2;font-weight:400;">AudioLink/SpinnageFactory/VUmeter</div>
<svg class="a" style="left:963.5px;top:78.8px;" width="4" height="3" viewBox="0 0 4 3"><path d="M0 0H3.8L1.9 2.4Z" fill="#d6d6d6"/></svg>
<div class="a" style="left:973px;top:75.1px;width:24px;height:8.7px;background:#545454;border-radius:1.5px"></div>
<div class="a t " style="left:976.5px;top:73.90px;font-size:7.59px;transform:scaleX(0.8709);color:#d8d8d8;font-weight:400;">Edit...</div>
<div class="a" style="left:1000px;top:75.4px;width:22px;height:8.4px;background:#4c4c4c;border-radius:1.5px"></div>
<svg class="a" style="left:1005px;top:76.8px;" width="6" height="5" viewBox="0 0 6 5"><rect x="0" y="0" width="6" height="0.8" fill="#aaa"/><rect x="1.3" y="1.4" width="4.7" height="0.8" fill="#aaa"/><rect x="1.3" y="2.8" width="4.7" height="0.8" fill="#aaa"/><rect x="1.3" y="4.2" width="4.7" height="0.8" fill="#aaa"/></svg>
<svg class="a" style="left:1015.5px;top:78.5px;" width="4" height="3" viewBox="0 0 4 3"><path d="M0 0H3.8L1.9 2.4Z" fill="#d6d6d6"/></svg>
<div class="a" style="left:964px;top:86.3px;width:33px;height:8.4px;background:#545454;border-radius:1.5px"></div>
<div class="a t " style="left:967.2px;top:85.30px;font-size:7.59px;transform:scaleX(0.8948);color:#d4d4d4;font-weight:400;">Check In</div>
<div class="a" style="left:999.3px;top:86.3px;width:22.7px;height:8.4px;background:#545454;border-radius:1.5px"></div>
<div class="a t " style="left:1002.8px;top:85.30px;font-size:7.59px;transform:scaleX(0.9093);color:#d4d4d4;font-weight:400;">Undo</div>
<svg class="a" style="left:1000.5px;top:61.8px;" width="6" height="6" viewBox="0 0 6 6"><circle cx="3" cy="3" r="2.9" fill="#dcdcdc"/><path d="M2 2.3Q2 1.2 3 1.2Q4 1.2 4 2.2Q4 2.9 3 3.3V3.9" fill="none" stroke="#3e3e3e" stroke-width="0.7"/><rect x="2.6" y="4.4" width="0.8" height="0.7" fill="#3e3e3e"/></svg>
<svg class="a" style="left:1008.5px;top:61.5px;" width="7" height="7" viewBox="0 0 7 7"><path d="M0.5 2H6M4.5 0.7L6 2L4.5 3.3M6.5 5H1M2.5 3.7L1 5L2.5 6.3" fill="none" stroke="#d0d0d0" stroke-width="0.8"/></svg>
<svg class="a" style="left:1019.5px;top:61.8px;" width="2" height="7" viewBox="0 0 2 7"><circle cx="1" cy="0.8" r="0.6" fill="#cfcfcf"/><circle cx="1" cy="3.2" r="0.6" fill="#cfcfcf"/><circle cx="1" cy="5.6" r="0.6" fill="#cfcfcf"/></svg>
<svg class="a" style="left:559.2px;top:88.2px;" width="5" height="5" viewBox="0 0 5 5"><circle cx="2.1" cy="2.1" r="1.7" fill="none" stroke="#2fb24a" stroke-width="0.9"/></svg>
<div class="a t " style="left:565.3px;top:84.80px;font-size:7.65px;transform:scaleX(0.9002);color:#b8b8b8;font-weight:400;">Added</div>
<div class="a t " style="left:573.5px;top:109.00px;font-size:7.48px;transform:scaleX(0.8737);color:#b4b4b4;font-weight:400;">VU Gain</div>
<div class="a t " style="left:573.5px;top:119.70px;font-size:7.48px;transform:scaleX(0.9130);color:#b4b4b4;font-weight:400;">Boundary Green/Yellow</div>
<div class="a t " style="left:573.5px;top:130.50px;font-size:7.48px;transform:scaleX(0.9091);color:#b4b4b4;font-weight:400;">Boundary Yellow/Red</div>
<div class="a t " style="left:573.5px;top:141.20px;font-size:7.48px;transform:scaleX(0.9091);color:#b4b4b4;font-weight:400;">Green Colour</div>
<div class="a t " style="left:573.5px;top:151.90px;font-size:7.48px;transform:scaleX(0.9091);color:#b4b4b4;font-weight:400;">Yellow Colour</div>
<div class="a t " style="left:573.5px;top:162.60px;font-size:7.48px;transform:scaleX(0.9091);color:#b4b4b4;font-weight:400;">Red Colour</div>
<div class="a t " style="left:573.5px;top:173.40px;font-size:7.48px;transform:scaleX(0.9091);color:#b4b4b4;font-weight:400;">Peek Needle</div>
<div class="a t " style="left:573.5px;top:184.20px;font-size:7.48px;transform:scaleX(0.9091);color:#b4b4b4;font-weight:400;">Needle Width</div>
<div class="a t " style="left:573.5px;top:194.90px;font-size:7.48px;transform:scaleX(0.9091);color:#b4b4b4;font-weight:400;">Needle Softness</div>
<div class="a t " style="left:573.5px;top:205.80px;font-size:7.48px;transform:scaleX(0.9003);color:#b4b4b4;font-weight:400;">Needle Length (0..1)</div>
<div class="a t " style="left:573.5px;top:216.60px;font-size:7.48px;transform:scaleX(0.9091);color:#b4b4b4;font-weight:400;">Emission Tint</div>
<div class="a t " style="left:573.5px;top:227.30px;font-size:7.48px;transform:scaleX(0.8855);color:#b4b4b4;font-weight:400;">Emission Gain</div>
<div class="a t " style="left:573.5px;top:245.70px;font-size:7.48px;transform:scaleX(0.8916);color:#b4b4b4;font-weight:400;">Render Queue</div>
<div class="a t " style="left:573.5px;top:256.90px;font-size:7.48px;transform:scaleX(0.9067);color:#b4b4b4;font-weight:400;">Double Sided Global Illumination</div>
<div class="a" style="left:764px;top:113.5px;width:222px;height:1.4px;background:#5c5c5c;border-radius:0.7px"></div>
<svg class="a" style="left:831.9px;top:110.2px;" width="8" height="8" viewBox="0 0 8 8"><circle cx="4" cy="4" r="3.1" fill="#a4a4a4" stroke="#8e8e8e" stroke-width="0.6"/></svg>
<div class="a" style="left:988.3px;top:109.60000000000001px;width:34px;height:9.2px;background:#2a2a2a;border-radius:2px;border:0.5px solid #262626"></div>
<div class="a t " style="left:990px;top:109.00px;font-size:7.59px;transform:scaleX(0.9091);color:#c8c8c8;font-weight:400;">1.3</div>
<div class="a" style="left:764px;top:124.2px;width:222px;height:1.4px;background:#5c5c5c;border-radius:0.7px"></div>
<svg class="a" style="left:870.75px;top:120.9px;" width="8" height="8" viewBox="0 0 8 8"><circle cx="4" cy="4" r="3.1" fill="#a4a4a4" stroke="#8e8e8e" stroke-width="0.6"/></svg>
<div class="a" style="left:988.3px;top:120.30000000000001px;width:34px;height:9.2px;background:#2a2a2a;border-radius:2px;border:0.5px solid #262626"></div>
<div class="a t " style="left:990px;top:119.70px;font-size:7.59px;transform:scaleX(0.9091);color:#c8c8c8;font-weight:400;">0.5</div>
<div class="a" style="left:764px;top:134.9px;width:222px;height:1.4px;background:#5c5c5c;border-radius:0.7px"></div>
<svg class="a" style="left:968.2px;top:131.6px;" width="8" height="8" viewBox="0 0 8 8"><circle cx="4" cy="4" r="3.1" fill="#a4a4a4" stroke="#8e8e8e" stroke-width="0.6"/></svg>
<div class="a" style="left:988.3px;top:131.0px;width:34px;height:9.2px;background:#2a2a2a;border-radius:2px;border:0.5px solid #262626"></div>
<div class="a t " style="left:990px;top:130.40px;font-size:7.59px;transform:scaleX(0.9091);color:#c8c8c8;font-weight:400;">0.95</div>
<div class="a" style="left:764px;top:188.9px;width:222px;height:1.4px;background:#5c5c5c;border-radius:0.7px"></div>
<svg class="a" style="left:849px;top:185.6px;" width="8" height="8" viewBox="0 0 8 8"><circle cx="4" cy="4" r="3.1" fill="#a4a4a4" stroke="#8e8e8e" stroke-width="0.6"/></svg>
<div class="a" style="left:988.3px;top:185.0px;width:34px;height:9.2px;background:#2a2a2a;border-radius:2px;border:0.5px solid #262626"></div>
<div class="a t " style="left:990px;top:184.40px;font-size:7.59px;transform:scaleX(0.9091);color:#c8c8c8;font-weight:400;">0.02</div>
<div class="a" style="left:764px;top:199.60000000000002px;width:222px;height:1.4px;background:#5c5c5c;border-radius:0.7px"></div>
<svg class="a" style="left:767px;top:196.3px;" width="8" height="8" viewBox="0 0 8 8"><circle cx="4" cy="4" r="3.1" fill="#a4a4a4" stroke="#8e8e8e" stroke-width="0.6"/></svg>
<div class="a" style="left:988.3px;top:195.70000000000002px;width:34px;height:9.2px;background:#2a2a2a;border-radius:2px;border:0.5px solid #262626"></div>
<div class="a t " style="left:990px;top:195.10px;font-size:7.59px;transform:scaleX(0.9091);color:#c8c8c8;font-weight:400;">0.001</div>
<div class="a" style="left:764px;top:210.5px;width:222px;height:1.4px;background:#5c5c5c;border-radius:0.7px"></div>
<svg class="a" style="left:979px;top:207.2px;" width="8" height="8" viewBox="0 0 8 8"><circle cx="4" cy="4" r="3.1" fill="#a4a4a4" stroke="#8e8e8e" stroke-width="0.6"/></svg>
<div class="a" style="left:988.3px;top:206.6px;width:34px;height:9.2px;background:#2a2a2a;border-radius:2px;border:0.5px solid #262626"></div>
<div class="a t " style="left:990px;top:206.00px;font-size:7.59px;transform:scaleX(0.9091);color:#c8c8c8;font-weight:400;">1</div>
<div class="a" style="left:764px;top:232.0px;width:222px;height:1.4px;background:#5c5c5c;border-radius:0.7px"></div>
<svg class="a" style="left:806px;top:228.7px;" width="8" height="8" viewBox="0 0 8 8"><circle cx="4" cy="4" r="3.1" fill="#a4a4a4" stroke="#8e8e8e" stroke-width="0.6"/></svg>
<div class="a" style="left:988.3px;top:228.1px;width:34px;height:9.2px;background:#2a2a2a;border-radius:2px;border:0.5px solid #262626"></div>
<div class="a t " style="left:990px;top:227.50px;font-size:7.59px;transform:scaleX(0.9091);color:#c8c8c8;font-weight:400;">2</div>
<div class="a" style="left:987.6px;top:141.6px;width:25.8px;height:9.8px;background:#1e1e1e;border-radius:1.5px"></div>
<div class="a" style="left:988.2px;top:142.2px;width:24.6px;height:8.8px;background:#00ff00;border-radius:1px"></div>
<div class="a" style="left:988.2px;top:149.0px;width:24.6px;height:2px;background:rgba(255,255,255,0.82);"></div>
<div class="a" style="left:1014.3px;top:141.79999999999998px;width:8px;height:9.6px;background:#303030;border-radius:1px"></div>
<svg class="a" style="left:1015px;top:142.6px;" width="7" height="8" viewBox="0 0 7 8"><path d="M1 7L4.6 3.4" stroke="#d6d6d6" stroke-width="1"/><path d="M3.8 2.2L5 3.4" stroke="#d6d6d6" stroke-width="1.6"/><path d="M4.8 1.2Q5.8 0.2 6.5 0.9Q7.2 1.6 6 2.6Z" fill="#d6d6d6"/></svg>
<div class="a" style="left:987.6px;top:152.3px;width:25.8px;height:9.8px;background:#1e1e1e;border-radius:1.5px"></div>
<div class="a" style="left:988.2px;top:152.9px;width:24.6px;height:8.8px;background:#ffff00;border-radius:1px"></div>
<div class="a" style="left:988.2px;top:159.70000000000002px;width:24.6px;height:2px;background:rgba(255,255,255,0.82);"></div>
<div class="a" style="left:1014.3px;top:152.5px;width:8px;height:9.6px;background:#303030;border-radius:1px"></div>
<svg class="a" style="left:1015px;top:153.3px;" width="7" height="8" viewBox="0 0 7 8"><path d="M1 7L4.6 3.4" stroke="#d6d6d6" stroke-width="1"/><path d="M3.8 2.2L5 3.4" stroke="#d6d6d6" stroke-width="1.6"/><path d="M4.8 1.2Q5.8 0.2 6.5 0.9Q7.2 1.6 6 2.6Z" fill="#d6d6d6"/></svg>
<div class="a" style="left:987.6px;top:163px;width:25.8px;height:9.8px;background:#1e1e1e;border-radius:1.5px"></div>
<div class="a" style="left:988.2px;top:163.6px;width:24.6px;height:8.8px;background:#ff0000;border-radius:1px"></div>
<div class="a" style="left:988.2px;top:170.4px;width:24.6px;height:2px;background:rgba(255,255,255,0.82);"></div>
<div class="a" style="left:1014.3px;top:163.2px;width:8px;height:9.6px;background:#303030;border-radius:1px"></div>
<svg class="a" style="left:1015px;top:164px;" width="7" height="8" viewBox="0 0 7 8"><path d="M1 7L4.6 3.4" stroke="#d6d6d6" stroke-width="1"/><path d="M3.8 2.2L5 3.4" stroke="#d6d6d6" stroke-width="1.6"/><path d="M4.8 1.2Q5.8 0.2 6.5 0.9Q7.2 1.6 6 2.6Z" fill="#d6d6d6"/></svg>
<div class="a" style="left:988px;top:174.8px;width:7px;height:7.7px;background:#262626;border-radius:1px"></div>
<svg class="a" style="left:989px;top:176.5px;" width="5" height="5" viewBox="0 0 5 5"><path d="M0.5 2.6L2 4L4.5 0.8" fill="none" stroke="#e8e8e8" stroke-width="0.9"/></svg>
<div class="a" style="left:987.7px;top:216.8px;width:25.8px;height:9.8px;background:#1e1e1e;border-radius:1.5px"></div>
<div class="a" style="left:988.3px;top:217.4px;width:24.6px;height:8.6px;background:#ffffff;border-radius:1px"></div>
<div class="a" style="left:990.6px;top:218.6px;width:1.2px;height:6px;background:#e0e0e0;"></div>
<div class="a" style="left:1009.6px;top:218.6px;width:1.2px;height:6px;background:#e0e0e0;"></div>
<div class="a t " style="left:994px;top:216.20px;font-size:6.60px;transform:scaleX(0.7973);color:#a0a0a0;font-weight:400;">HDR</div>
<div class="a" style="left:1014.3px;top:217px;width:8px;height:9.6px;background:#303030;border-radius:1px"></div>
<svg class="a" style="left:1015px;top:217.8px;" width="7" height="8" viewBox="0 0 7 8"><path d="M1 7L4.6 3.4" stroke="#d6d6d6" stroke-width="1"/><path d="M3.8 2.2L5 3.4" stroke="#d6d6d6" stroke-width="1.6"/><path d="M4.8 1.2Q5.8 0.2 6.5 0.9Q7.2 1.6 6 2.6Z" fill="#d6d6d6"/></svg>
<div class="a" style="left:934.8px;top:246.9px;width:51.6px;height:8.1px;background:#4c4c4c;border-radius:1.5px"></div>
<div class="a t " style="left:936.5px;top:245.60px;font-size:7.59px;transform:scaleX(0.8715);color:#c8c8c8;font-weight:400;">From Shader</div>
<svg class="a" style="left:979.5px;top:249.8px;" width="4" height="3" viewBox="0 0 4 3"><path d="M0 0H3.8L1.9 2.4Z" fill="#d6d6d6"/></svg>
<div class="a" style="left:988.3px;top:246.9px;width:34px;height:9.2px;background:#2a2a2a;border-radius:2px;border:0.5px solid #262626"></div>
<div class="a t " style="left:990px;top:246.20px;font-size:7.59px;transform:scaleX(0.9298);color:#c8c8c8;font-weight:400;">2000</div>
<div class="a" style="left:988px;top:258.9px;width:7px;height:7.8px;background:#2c2c2c;border-radius:1px;border:0.5px solid #262626"></div>
<div class="a" style="left:556px;top:430.5px;width:468px;height:9.5px;background:#3e3e3e;"></div>
<div class="a" style="left:556px;top:429.8px;width:468px;height:0.7px;background:#2b2b2b;"></div>
<div class="a" style="left:629px;top:432.8px;width:333px;height:0.6px;background:#4a4a4a;"></div>
<div class="a" style="left:629px;top:434.6px;width:333px;height:0.6px;background:#4a4a4a;"></div>
<div class="a" style="left:629px;top:436.4px;width:333px;height:0.6px;background:#4a4a4a;"></div>
<div class="a" style="left:629px;top:438.2px;width:333px;height:0.6px;background:#4a4a4a;"></div>
<div class="a t " style="left:557px;top:429.90px;font-size:7.05px;transform:scaleX(0.9092);color:#d8d8d8;font-weight:700;">m_VUmeter_Audiolink</div>
<div class="a" style="left:968px;top:430.6px;width:56px;height:9.2px;background:#393939;"></div>
<div class="a" style="left:968px;top:430.6px;width:0.6px;height:9.2px;background:#303030;"></div>
<div class="a" style="left:978px;top:430.6px;width:0.6px;height:9.2px;background:#303030;"></div>
<div class="a" style="left:988.7px;top:430.6px;width:0.6px;height:9.2px;background:#303030;"></div>
<div class="a" style="left:999.3px;top:430.6px;width:0.6px;height:9.2px;background:#303030;"></div>
<div class="a" style="left:1015.3px;top:430.6px;width:0.6px;height:9.2px;background:#303030;"></div>
<svg class="a" style="left:970.4px;top:432.2px;" width="5" height="6" viewBox="0 0 5 6"><path d="M0.3 0.3L4.6 3L0.3 5.7Z" fill="#d8d8d8"/></svg>
<svg class="a" style="left:980px;top:431.9px;" width="7" height="7" viewBox="0 0 7 7"><circle cx="3.3" cy="3.3" r="3" fill="#d6d6d6"/><path d="M0.3 3.3H6.3" stroke="#555" stroke-width="1"/></svg>
<svg class="a" style="left:991px;top:431.3px;" width="7" height="8" viewBox="0 0 7 8"><circle cx="2" cy="2.5" r="1.4" fill="#f0c030"/><circle cx="5.3" cy="1.5" r="1.2" fill="#f0c030"/><circle cx="4" cy="5.5" r="1.9" fill="none" stroke="#ccc" stroke-width="0.8"/></svg>
<svg class="a" style="left:1000.5px;top:431.9px;" width="7" height="7" viewBox="0 0 7 7"><circle cx="3.3" cy="3.3" r="3" fill="#78c4ea"/><path d="M0.3 3.6H6.3" stroke="#e8f2f8" stroke-width="1.1"/></svg>
<svg class="a" style="left:1010px;top:434px;" width="4" height="3" viewBox="0 0 4 3"><path d="M0 0H3.8L1.9 2.4Z" fill="#d6d6d6"/></svg>
<div class="a" style="left:1020px;top:432.2px;width:1.2px;height:5.5px;background:#aaa;"></div>
<div class="a" style="left:556px;top:440px;width:468px;height:97px;background:#313131;"></div>
<svg class="a" style="left:745px;top:444px;" width="92" height="92" viewBox="0 0 92 92"><circle cx="45.2" cy="45.2" r="44.4" fill="#000"/><path d="M44.6 2.5 Q42.3 25 42 48 Q41.9 70 43.2 89.3 L45.4 89.3 Q45.3 60 45.3 40 Q45.3 20 45.3 2.5Z" fill="#1fe01c"/></svg>
<div class="a" style="left:556px;top:537px;width:468px;height:27px;background:#3c3c3c;"></div>
<div class="a" style="left:556px;top:536.7px;width:468px;height:0.6px;background:#2b2b2b;"></div>
<svg class="a" style="left:1011.5px;top:538.5px;" width="10" height="9" viewBox="0 0 10 9"><circle cx="5" cy="4.5" r="4.3" fill="#1f4c8e"/><path d="M2.7 2.6V4.6L5.1 7L7.1 5L4.7 2.6Z" fill="#e6ecf6"/><circle cx="3.8" cy="3.7" r="0.5" fill="#1f4c8e"/></svg>
<div class="a t " style="left:557px;top:551.80px;font-size:7.59px;transform:scaleX(0.8940);color:#a8a8a8;font-weight:400;">AssetBundle</div>
<div class="a" style="left:607px;top:553.1px;width:323px;height:7.9px;background:#4c4c4c;border-radius:1.5px"></div>
<div class="a t " style="left:609px;top:551.80px;font-size:7.59px;transform:scaleX(0.9091);color:#d8d8d8;font-weight:400;">None</div>
<svg class="a" style="left:923px;top:556px;" width="4" height="3" viewBox="0 0 4 3"><path d="M0 0H3.8L1.9 2.4Z" fill="#d6d6d6"/></svg>
<div class="a" style="left:934px;top:553.1px;width:88px;height:7.9px;background:#4c4c4c;border-radius:1.5px"></div>
<div class="a t " style="left:936px;top:551.80px;font-size:7.59px;transform:scaleX(0.9091);color:#d0d0d0;font-weight:400;">None</div>
<svg class="a" style="left:1016px;top:556px;" width="4" height="3" viewBox="0 0 4 3"><path d="M0 0H3.8L1.9 2.4Z" fill="#d6d6d6"/></svg>
<svg class="a" style="left:985px;top:566.5px;" width="8" height="8" viewBox="0 0 8 8"><circle cx="4" cy="4.3" r="2.3" fill="#ddd"/><path d="M0.5 0.8L7.5 7.8M4 0.5V2M1 4.3H0M8 4.3H7M1.2 7.3L2.3 6.2M6.8 7.3L5.7 6.2" stroke="#ddd" stroke-width="0.7"/></svg>
<svg class="a" style="left:1000px;top:566.5px;" width="8" height="8" viewBox="0 0 8 8"><ellipse cx="3.5" cy="1.5" rx="3" ry="1.2" fill="none" stroke="#ddd" stroke-width="0.7"/><path d="M0.5 1.5V5.5Q3.5 7.5 6.5 5.5V1.5M0.5 3.5Q3.5 5.5 6.5 3.5" fill="none" stroke="#ddd" stroke-width="0.7"/><path d="M3 3L8 8" stroke="#ddd" stroke-width="0.8"/></svg>
<svg class="a" style="left:1014px;top:566.2px;" width="8" height="8" viewBox="0 0 8 8"><circle cx="4" cy="4" r="3.4" fill="none" stroke="#ddd" stroke-width="0.8"/><path d="M2.3 4.1L3.6 5.3L5.8 2.8" fill="none" stroke="#ddd" stroke-width="0.8"/></svg>
</body></html>
